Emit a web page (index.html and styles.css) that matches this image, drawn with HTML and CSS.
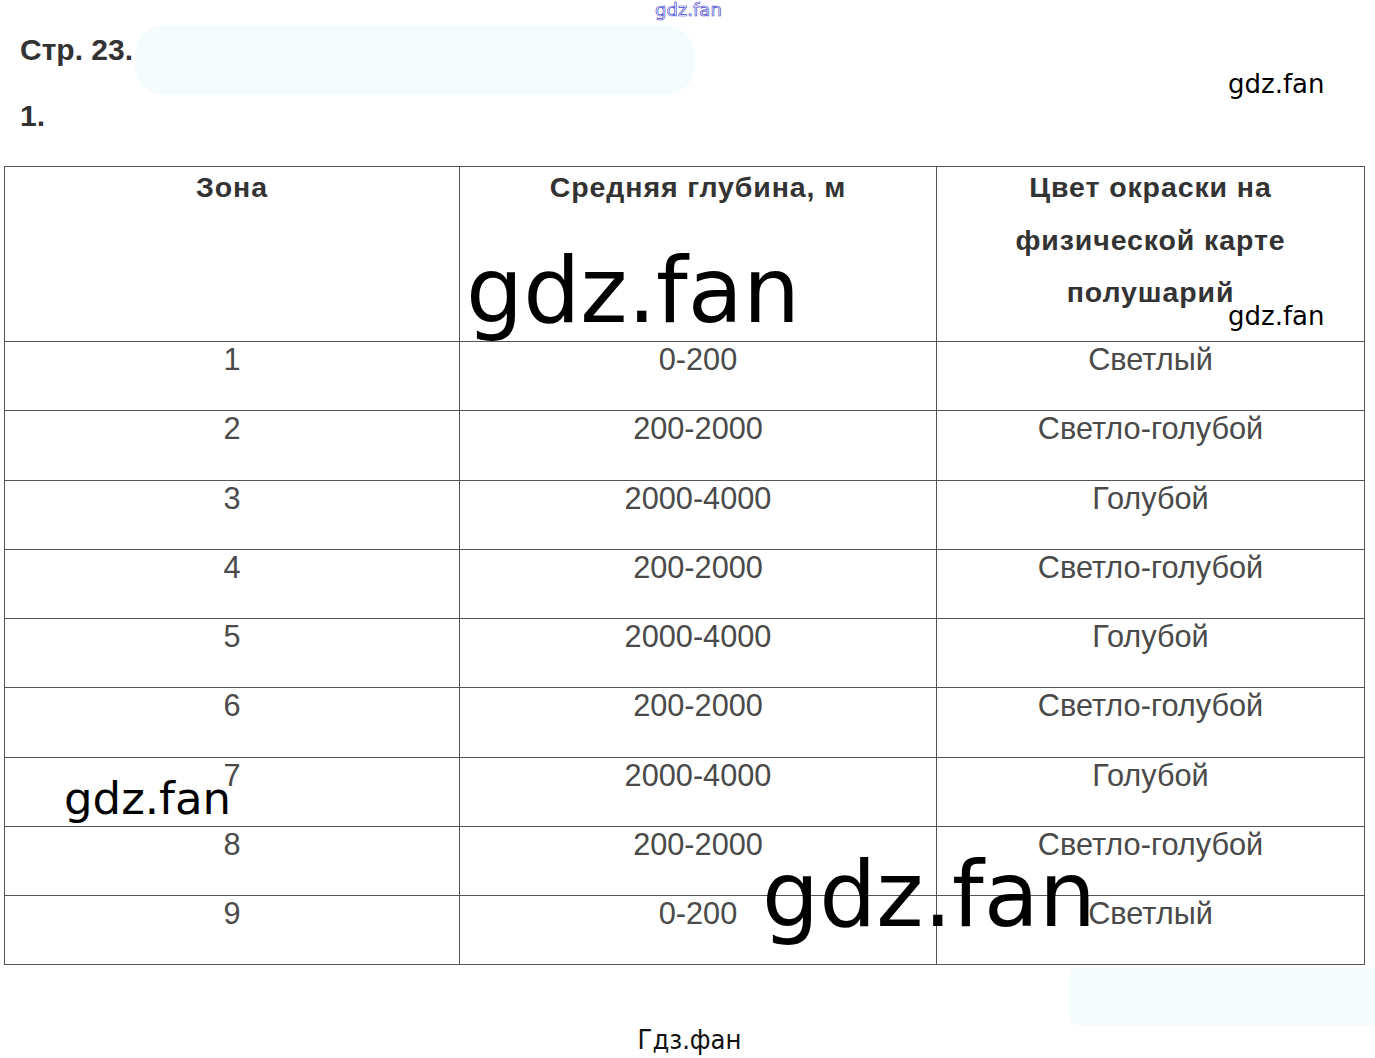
FILE: index.html
```html
<!DOCTYPE html>
<html lang="ru">
<head>
<meta charset="utf-8">
<title>Стр. 23</title>
<link rel="stylesheet" href="styles.css">
</head>
<body>
<div class="page">
  <div class="blob blob-top"></div>
  <div class="blob blob-bottom"></div>
  <div class="wm wm-outline">gdz.fan</div>
  <div class="wm wm-s1">gdz.fan</div>
  <div class="wm wm-s2">gdz.fan</div>
  <div class="wm wm-big1">gdz.fan</div>
  <div class="wm wm-mid">gdz.fan</div>
  <div class="wm wm-big2">gdz.fan</div>

  <p class="title">Стр. 23.</p>
  <p class="num">1.</p>

  <table class="grid">
    <colgroup>
      <col class="c1"><col class="c2"><col class="c3">
    </colgroup>
    <thead>
      <tr class="head">
        <th><div class="hin">Зона</div></th>
        <th><div class="hin">Средняя глубина, м</div></th>
        <th><div class="hin">Цвет окраски на<br>физической карте<br>полушарий</div></th>
      </tr>
    </thead>
    <tbody>
      <tr><td>1</td><td>0-200</td><td>Светлый</td></tr>
      <tr><td>2</td><td>200-2000</td><td>Светло-голубой</td></tr>
      <tr><td>3</td><td>2000-4000</td><td>Голубой</td></tr>
      <tr><td>4</td><td>200-2000</td><td>Светло-голубой</td></tr>
      <tr><td>5</td><td>2000-4000</td><td>Голубой</td></tr>
      <tr><td>6</td><td>200-2000</td><td>Светло-голубой</td></tr>
      <tr><td>7</td><td>2000-4000</td><td>Голубой</td></tr>
      <tr><td>8</td><td>200-2000</td><td>Светло-голубой</td></tr>
      <tr><td>9</td><td>0-200</td><td>Светлый</td></tr>
    </tbody>
  </table>

  <p class="footer">Гдз.фан</p>
</div>
</body>
</html>
```

FILE: styles.css
```css
html, body {
  margin: 0;
  padding: 0;
  background: #ffffff;
}

.page {
  position: relative;
  width: 1375px;
  height: 1058px;
  overflow: hidden;
  padding: 0 0 0 4px;
  box-sizing: border-box;
  font-family: "Liberation Sans", Arial, sans-serif;
}

.title, .num {
  margin: 0;
  padding-left: 16px;
  font-size: 30px;
  line-height: 30px;
  font-weight: bold;
  color: #333333;
  position: relative;
  z-index: 1;
}

.title { padding-top: 35px; }
.num { margin-top: 36px; }

.grid {
  margin-top: 35px;
  border-collapse: collapse;
  table-layout: fixed;
  width: 1360px;
  position: relative;
  z-index: 1;
}

.c1 { width: 455px; }
.c2 { width: 477px; }
.c3 { width: 428px; }

.grid th, .grid td {
  border: 1px solid #555555;
  padding: 0;
  text-align: center;
  vertical-align: top;
}

.head th {
  height: 174px;
  font-size: 28.5px;
  font-weight: bold;
  letter-spacing: 0.9px;
  color: #333333;
  line-height: 52.5px;
}

.hin {
  margin-top: -6px;
}

.grid td {
  height: 69.25px;
  font-size: 30.7px;
  line-height: 36px;
  padding-top: 0;
  color: #4a4a4a;
  box-sizing: border-box;
}

.footer {
  margin: 60px 0 0 0;
  text-align: center;
  font-family: "DejaVu Sans Condensed", "DejaVu Sans", sans-serif;
  font-size: 27px;
  line-height: 30px;
  color: #111111;
}

.blob {
  position: absolute;
  background: #f4fcfd;
  z-index: 0;
}

.blob-top {
  left: 135px;
  top: 25px;
  width: 560px;
  height: 70px;
  border-radius: 30px;
}

.blob-bottom {
  left: 1070px;
  top: 968px;
  width: 305px;
  height: 57px;
  border-radius: 6px 0 0 6px;
}

.wm {
  position: absolute;
  font-family: "DejaVu Sans", sans-serif;
  color: #000000;
  white-space: nowrap;
  z-index: 2;
  line-height: 1;
}

.wm-outline {
  left: 655px;
  top: 1px;
  font-size: 18px;
  color: #ffffff;
  -webkit-text-stroke: 0.7px #4a4ad0;
}

.wm-s1 {
  left: 1228px;
  top: 71px;
  font-size: 26px;
}

.wm-s2 {
  left: 1228px;
  top: 303px;
  font-size: 26px;
}

.wm-big1 {
  left: 466px;
  top: 246px;
  font-size: 90px;
}

.wm-mid {
  left: 64px;
  top: 776px;
  font-size: 45px;
}

.wm-big2 {
  left: 762px;
  top: 850px;
  font-size: 90px;
}
```
